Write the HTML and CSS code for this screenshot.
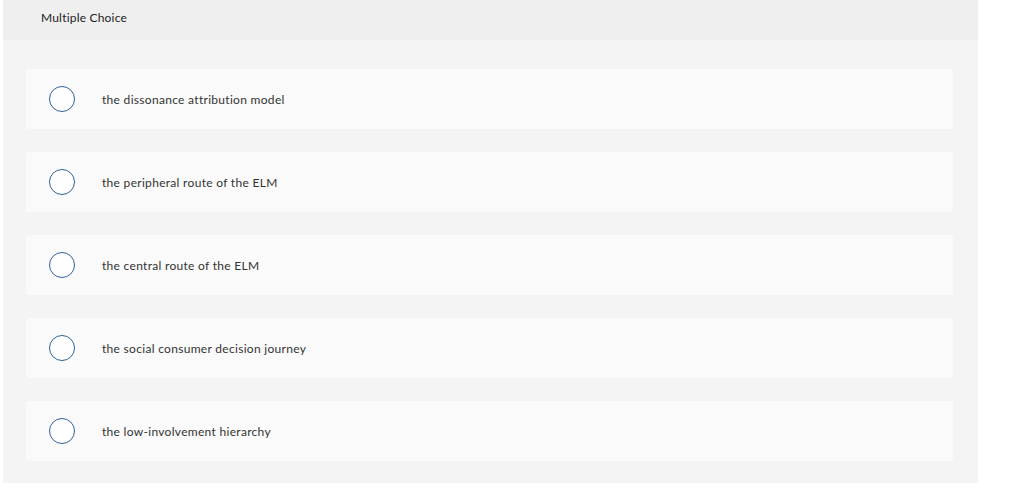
FILE: index.html
```html
<!DOCTYPE html>
<html lang="en">
<head>
<meta charset="utf-8">
<title>Multiple Choice</title>
<link rel="stylesheet" href="styles.css">
</head>
<body>
<div class="question">
  <div class="question-header">Multiple Choice</div>
  <div class="choices">
    <label class="choice"><span class="radio"></span><span class="choice-text">the dissonance attribution model</span></label>
    <label class="choice"><span class="radio"></span><span class="choice-text">the peripheral route of the ELM</span></label>
    <label class="choice"><span class="radio"></span><span class="choice-text">the central route of the ELM</span></label>
    <label class="choice"><span class="radio"></span><span class="choice-text">the social consumer decision journey</span></label>
    <label class="choice"><span class="radio"></span><span class="choice-text">the low-involvement hierarchy</span></label>
  </div>
</div>
</body>
</html>
```

FILE: styles.css
```css
html, body {
  margin: 0;
  padding: 0;
  background: #ffffff;
}
body {
  font-family: "Lato", "Open Sans", "Liberation Sans", sans-serif;
  color: #333333;
}
.question {
  margin-left: 3px;
  width: 975px;
  background: #f4f4f4;
}
.question-header {
  height: 40px;
  box-sizing: border-box;
  padding: 10px 0 0 38px;
  background: #efefef;
  font-size: 12px;
  line-height: 16px;
  letter-spacing: 0.2px;
  color: #222222;
}
.choices {
  display: flex;
  flex-direction: column;
  gap: 23px;
  padding: 29px 25px 22px 23px;
}
.choice {
  display: flex;
  align-items: center;
  height: 60px;
  box-sizing: border-box;
  padding-left: 23px;
  background: #fafafa;
  border-radius: 3px;
  cursor: pointer;
}
.radio {
  width: 26px;
  height: 26px;
  box-sizing: border-box;
  border: 1.5px solid #30609b;
  border-radius: 50%;
  background: #ffffff;
  flex: none;
}
.choice-text {
  margin-left: 27px;
  padding-top: 1px;
  font-size: 12px;
  line-height: 14px;
  letter-spacing: 0.3px;
  color: #333333;
}
```
